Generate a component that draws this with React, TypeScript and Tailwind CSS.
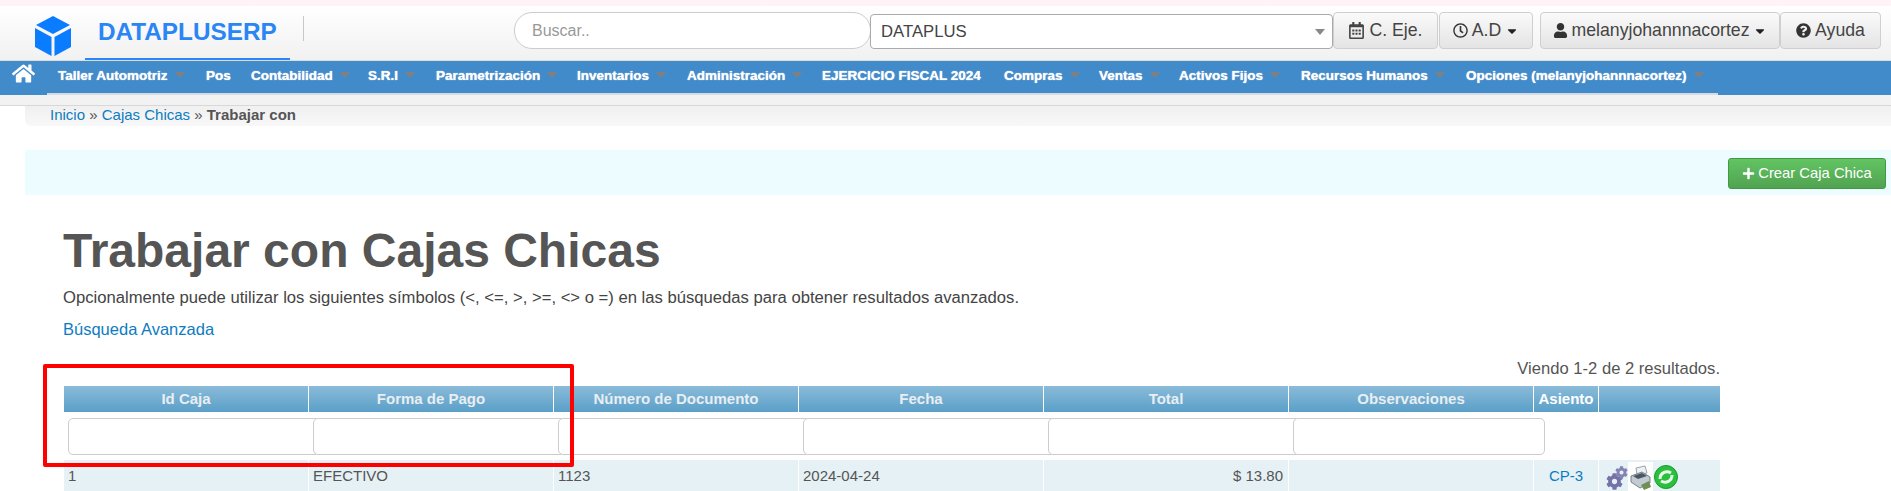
import { FaCaretDown, FaCog, FaHome, FaPlus, FaQuestionCircle, FaRegCalendarAlt, FaRegClock, FaUser } from "react-icons/fa";

const menu = [
    { label: "Taller Automotriz", width: "w-[148px]", caret: true },
    { label: "Pos", width: "w-[45px]", caret: false },
    { label: "Contabilidad", width: "w-[117px]", caret: true },
    { label: "S.R.I", width: "w-[68px]", caret: true },
    { label: "Parametrización", width: "w-[141px]", caret: true },
    { label: "Inventarios", width: "w-[110px]", caret: true },
    { label: "Administración", width: "w-[135px]", caret: true },
    { label: "EJERCICIO FISCAL 2024", width: "w-[182px]", caret: false },
    { label: "Compras", width: "w-[95px]", caret: true },
    { label: "Ventas", width: "w-[80px]", caret: true },
    { label: "Activos Fijos", width: "w-[122px]", caret: true },
    { label: "Recursos Humanos", width: "w-[165px]", caret: true },
    { label: "Opciones (melanyjohannnacortez)", width: "w-[263px]", caret: true },
];

const columns = ["Id Caja", "Forma de Pago", "Número de Documento", "Fecha", "Total", "Observaciones", "Asiento", ""];
const gridCols = "grid grid-cols-[245px_245px_245px_245px_245px_245px_65px_121px]";
const btn = "flex h-[37px] items-center justify-center gap-1 rounded-[4px] border border-[#cfcfcf] bg-gradient-to-b from-[#fafafa] to-[#e4e4e4] text-[17.7px] text-[#444]";

const Caret = () => (
    <span className="ml-[7px] mt-[5px] h-0 w-0 border-x-[5px] border-t-[6px] border-x-transparent border-t-[#808080]" />
);

const Logo = () => (
    <svg width="38" height="42" viewBox="0 0 38 42" className="ml-[34px]">
        <path d="M19 1 L36 10 L19 19 L2 10 Z" fill="#0a7cff" />
        <path d="M1 13 L17.5 22 L17.5 41 L1 32 Z" fill="#0a7cff" />
        <path d="M37 13 L20.5 22 L20.5 41 L37 32 Z" fill="#0a7cff" />
    </svg>
);

const Printer = () => (
    <svg width="25" height="30" viewBox="0 0 25 30" className="bg-white">
        <path d="M8 6 L17 4 L19 11 L9 13 Z" fill="#eef1f4" stroke="#9aa3ad" />
        <path d="M3 14 L14 10 L22 15 L22 21 L12 26 L3 20 Z" fill="#c3cad2" stroke="#77808a" />
        <path d="M5 14 L14 11 L19 14 L10 17 Z" fill="#4a5663" />
        <path d="M13 23 L21 19 L23 25 L16 28 Z" fill="#6f8f55" />
    </svg>
);

const Refresh = () => (
    <svg width="26" height="26" viewBox="0 0 26 26">
        <circle cx="13" cy="13" r="11.5" fill="#2cbf3e" stroke="#1b9a30" />
        <path d="M7 15 C7 9 13 6 18 9" fill="none" stroke="#e6f8e8" strokeWidth="3" />
        <path d="M19 11 C19 17 13 20 8 17" fill="none" stroke="#e6f8e8" strokeWidth="3" />
    </svg>
);

export default function App() {
    return (
        <div className="relative h-[491px] overflow-hidden bg-white font-['Liberation_Sans',Arial,sans-serif] text-[#555]">
            <div className="h-[6px] bg-[#fff3f7] shadow-[0_1px_3px_rgba(0,0,0,0.35)]" />

            {/* Header */}
            <header className="flex h-[54px] items-start bg-gradient-to-b from-white to-[#f1f1f1]">
                <div className="mt-[9px]"><Logo /></div>
                <div className="relative ml-[13px] h-[54px] w-[205px] border-b-[2px] border-[#2a85f5] pl-[13px] pt-[13px] text-[24.3px] font-bold leading-[26px] text-[#2a85f5]">
                    DATAPLUSERP
                </div>
                <div className="ml-[13px] mt-[10px] h-[25px] w-px bg-[#c8c8c8]" />
                <div className="ml-[210px] mt-[6px] flex h-[37px] w-[357px] items-center rounded-[18px] border border-[#ccc] bg-white pl-[17px] text-[16px] text-[#999]">
                    Buscar..
                </div>
                <div className="ml-[-1px] mt-[8px] flex h-[35px] w-[463px] items-center justify-between rounded-[4px] border border-[#aaa] bg-white pl-[10px] pr-[7px] text-[16.7px] text-[#444]">
                    DATAPLUS
                    <span className="h-0 w-0 border-x-[5px] border-t-[6px] border-x-transparent border-t-[#888]" />
                </div>
                <div className="mt-[6px] flex">
                    <div className={`${btn} w-[105px]`}><FaRegCalendarAlt className="text-[17px]" />C. Eje.</div>
                    <div className={`${btn} ml-px w-[94px]`}><FaRegClock className="text-[15px] text-[#333]" />A.D<FaCaretDown className="text-[14px] text-[#222]" /></div>
                    <div className={`${btn} ml-[7px] w-[240px]`}><FaUser className="text-[15px] text-[#333]" />melanyjohannnacortez<FaCaretDown className="text-[14px] text-[#222]" /></div>
                    <div className={`${btn} w-[101px]`}><FaQuestionCircle className="text-[15px] text-[#333]" />Ayuda</div>
                </div>
            </header>

            {/* Nav */}
            <nav className="flex h-[35px] border-t border-[#ddd] bg-[#428bca] pl-[2px]">
                <div className="flex w-[45px] items-start pl-[10px] pt-[1px]">
                    <FaHome className="text-[23px] text-white" />
                </div>
                {menu.map((item) => (
                    <div key={item.label} className={`${item.width} flex items-start border-b-[2px] border-b-[#d5dbe0] pl-[11px] pt-[6px] text-[13.5px] font-bold leading-[17px] text-white [text-shadow:0_0_1px_#fff]`}>
                        <span className="whitespace-nowrap">{item.label}</span>
                        {item.caret && <Caret />}
                    </div>
                ))}
            </nav>

            <div className="h-[11px] border-b border-[#d8d8d8] bg-[#f2f2f2]" />

            {/* Breadcrumb */}
            <div className="ml-[25px] h-[20px] rounded-bl-[6px] bg-gradient-to-b from-[#f0f0f0] to-[#f8f8f8] pl-[25px] text-[15px] leading-[17px]">
                <a className="text-[#0d7cc1]">Inicio</a> » <a className="text-[#0d7cc1]">Cajas Chicas</a> » <b>Trabajar con</b>
            </div>

            {/* Action bar */}
            <div className="ml-[25px] mt-[24px] flex h-[45px] items-center justify-end bg-[#edfcfe] pr-[5px]">
                <div className="mt-[1px] flex h-[31px] w-[158px] items-center justify-center gap-[3px] rounded-[3px] border border-[#3f9a40] bg-gradient-to-b from-[#62c462] to-[#51a351] text-[14.8px] text-white">
                    <FaPlus className="text-[13px]" />Crear Caja Chica
                </div>
            </div>

            {/* Content */}
            <main className="pl-[63px]">
                <h1 className="mt-[28px] text-[48px] font-bold leading-[56px] text-[#555]">Trabajar con Cajas Chicas</h1>
                <p className="mt-[9px] text-[16.65px] leading-[20px] text-[#444]">
                    Opcionalmente puede utilizar los siguientes símbolos (&lt;, &lt;=, &gt;, &gt;=, &lt;&gt; o =) en las búsquedas para obtener resultados avanzados.
                </p>
                <a className="mt-[11px] block text-[16.5px] leading-[20px] text-[#0d7cc1]">Búsqueda Avanzada</a>

                <div className="ml-px w-[1656px]">
                    <div className="mt-[20px] h-[20px] text-right text-[16.6px] leading-[20px] text-[#555]">Viendo 1-2 de 2 resultados.</div>

                    <div className={`${gridCols} mt-[7px] h-[26px] bg-gradient-to-b from-[#8abbd9] to-[#5a9fc8]`}>
                        {columns.map((col, i) => (
                            <div key={i} className={`flex items-center justify-center border-r border-white text-[15px] font-bold last:border-r-0 ${col === "Asiento" ? "text-white" : "text-[#e8eef2]"}`}>
                                {col}
                            </div>
                        ))}
                    </div>

                    {/* Filters */}
                    <div className={`${gridCols} h-[48px]`}>
                        {columns.slice(0, 6).map((col) => (
                            <div key={col} className="pl-[4px] pt-[6px]">
                                <div className="relative h-[37px] w-[252px] rounded-[5px] border border-[#ccc] bg-white" />
                            </div>
                        ))}
                    </div>

                    {/* Row */}
                    <div className={`${gridCols} h-[33px] bg-[#e5f1f4] text-[15px] leading-[32px] text-[#555]`}>
                        <div className="border-r border-white pl-[4px]">1</div>
                        <div className="border-r border-white pl-[4px]">EFECTIVO</div>
                        <div className="border-r border-white pl-[4px]">1123</div>
                        <div className="border-r border-white pl-[4px]">2024-04-24</div>
                        <div className="border-r border-white pr-[5px] text-right">$ 13.80</div>
                        <div className="border-r border-white" />
                        <div className="border-r border-white text-center text-[#0d7cc1]">CP-3</div>
                        <div className="flex items-center pl-[7px]">
                            <span className="relative h-[26px] w-[22px]">
                                <FaCog className="absolute bottom-0 left-0 text-[17px] text-[#7472a6]" />
                                <FaCog className="absolute right-0 top-[2px] text-[13px] text-[#8583b3]" />
                            </span>
                            <Printer />
                            <Refresh />
                        </div>
                    </div>
                </div>
            </main>

            {/* Red annotation box */}
            <div className="absolute left-[43px] top-[364px] h-[103px] w-[531px] rounded-[2px] border-[4px] border-[#f00]" />
        </div>
    );
}
